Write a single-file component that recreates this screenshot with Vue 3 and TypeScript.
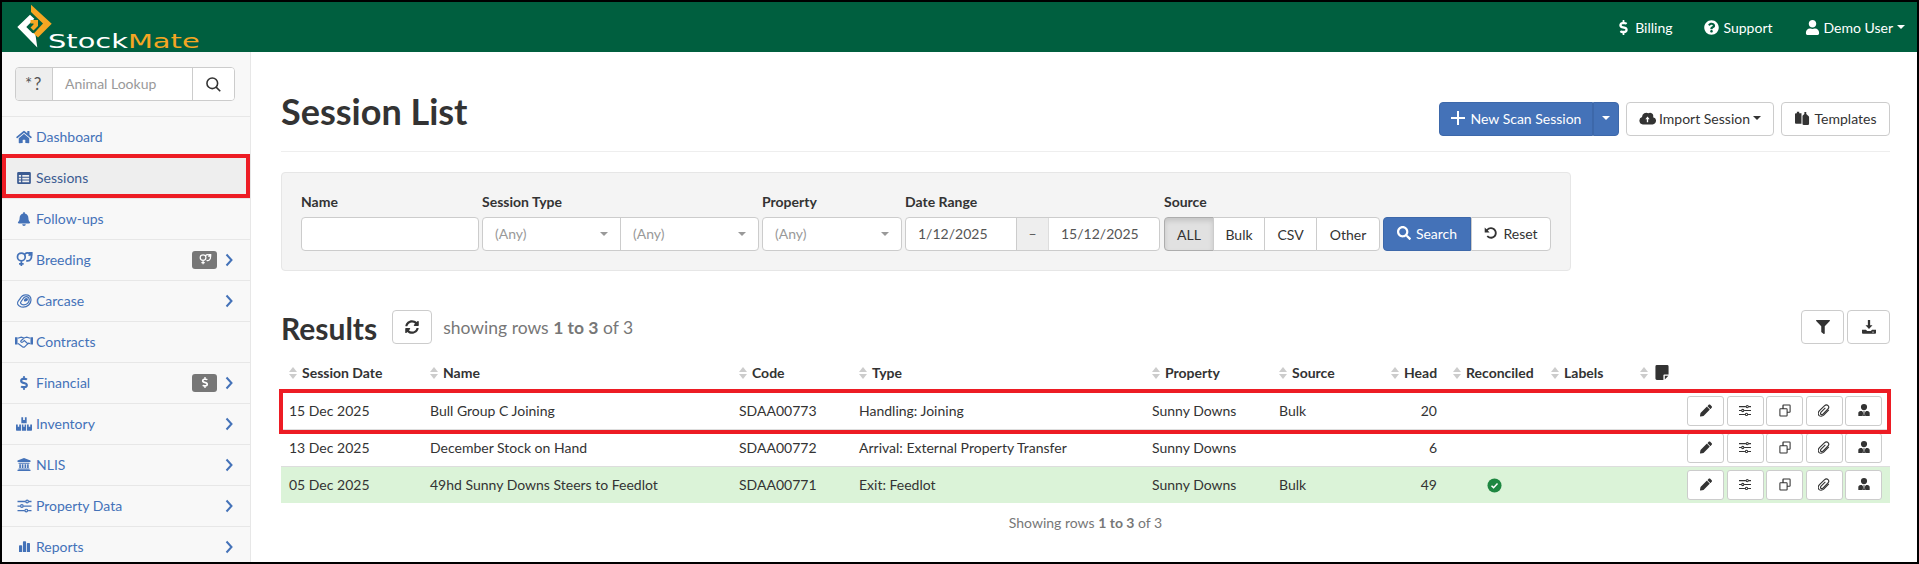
<template>
  <div class="frame">
    <header class="topbar">
      <a class="brand">
        <svg class="brand-mark" viewBox="0 0 36 46">
          <path d="M1.3 24 14 11.7l4.3 4.1-8 8.2 6 6 3 .4 2 14z" fill="#fff" />
          <path d="M15 1.7 35.7 20.7 22 34.5l-4.2-4L27 20.5 15 9z" fill="#f5a623" />
          <path d="M14.5 17h7.5v6l-4.5 4.5-3-3 3-3v-1h-3z" fill="#f5a623" />
        </svg>
        <span class="brand-name">Stock<em>Mate</em></span>
      </a>
      <nav class="topnav">
        <a><Icon name="dollar" class="top-ico" /> Billing</a>
        <a><Icon name="question" class="top-ico" /> Support</a>
        <a><Icon name="user" class="top-ico" /> Demo User <i class="caret"></i></a>
      </nav>
    </header>

    <div class="body">
      <aside class="sidebar">
        <div class="lookup">
          <div class="lookup-group">
            <span class="lookup-addon">*?</span>
            <span class="lookup-input">Animal Lookup</span>
            <button class="lookup-btn"><Icon name="searchThin" class="lookup-ico" /></button>
          </div>
        </div>
        <a
          v-for="item in navItems"
          :key="item.label"
          class="nav-item"
          :class="{ active: item.label === 'Sessions' }"
        >
          <span class="nav-ico-wrap"><Icon :name="item.icon" class="nav-ico" :class="'i-' + item.icon" /></span>
          <span class="nav-label">{{ item.label }}</span>
          <span v-if="item.badge" class="badge"><Icon :name="item.badge" class="badge-ico" /></span>
          <svg v-if="item.arrow" class="chev" viewBox="0 0 8 14">
            <path d="M1.5 1.5 6.5 7l-5 5.5" fill="none" stroke="currentColor" stroke-width="2" />
          </svg>
        </a>
      </aside>

      <main class="content">
        <div class="page-head">
          <h1>Session List</h1>
          <div class="page-actions">
            <div class="split">
              <button class="btn primary new-btn"><Icon name="plus" class="btn-ico" /> New Scan Session</button>
              <button class="btn primary split-caret"><i class="caret"></i></button>
            </div>
            <button class="btn import-btn"><Icon name="cloud" class="btn-ico" /> Import Session <i class="caret dark"></i></button>
            <button class="btn tmpl-btn"><Icon name="tags" class="btn-ico" /> Templates</button>
          </div>
        </div>

        <section class="filters">
          <div class="field f-name">
            <label>Name</label>
            <div class="control"></div>
          </div>
          <div class="field f-type">
            <label>Session Type</label>
            <div class="control joined">
              <span class="select first">(Any)<i class="caret grey"></i></span>
              <span class="select">(Any)<i class="caret grey"></i></span>
            </div>
          </div>
          <div class="field f-prop">
            <label>Property</label>
            <div class="control joined">
              <span class="select">(Any)<i class="caret grey"></i></span>
            </div>
          </div>
          <div class="field f-date">
            <label>Date Range</label>
            <div class="control joined">
              <span class="date">1/12/2025</span>
              <span class="dash">–</span>
              <span class="date">15/12/2025</span>
            </div>
          </div>
          <div class="field f-src">
            <label>Source</label>
            <div class="src-row">
              <div class="btn-group">
                <button
                  v-for="s in sources"
                  :key="s.label"
                  class="seg"
                  :class="{ on: s.label === 'ALL' }"
                  :style="{ width: s.width + 'px' }"
                >{{ s.label }}</button>
              </div>
              <button class="btn primary search-btn"><Icon name="search" class="btn-ico" /> Search</button>
              <button class="btn reset-btn"><Icon name="undo" class="btn-ico" /> Reset</button>
            </div>
          </div>
        </section>

        <div class="results-head">
          <h2>Results</h2>
          <button class="btn icon-btn refresh"><Icon name="sync" class="btn-ico" /></button>
          <span class="rows-info">showing rows <b>1 to 3</b> of 3</span>
          <div class="results-tools">
            <button class="btn icon-btn tool"><Icon name="filter" class="btn-ico" /></button>
            <button class="btn icon-btn tool"><Icon name="download" class="btn-ico" /></button>
          </div>
        </div>

        <table class="grid">
          <colgroup>
            <col v-for="(w, i) in colWidths" :key="i" :style="{ width: w + 'px' }" />
          </colgroup>
          <thead>
            <tr>
              <th v-for="h in headers" :key="h.label" :class="{ right: h.right }">
                <i class="sort"></i>{{ h.label }}<Icon v-if="h.note" name="note" class="note-ico" />
              </th>
              <th></th>
            </tr>
          </thead>
          <tbody>
            <tr v-for="row in rows" :key="row.code" :class="{ done: row.reconciled, marked: row.marked }">
              <td>{{ row.date }}</td>
              <td>{{ row.name }}</td>
              <td>{{ row.code }}</td>
              <td>{{ row.type }}</td>
              <td>{{ row.property }}</td>
              <td>{{ row.source }}</td>
              <td class="right">{{ row.head }}</td>
              <td class="center">
                <svg v-if="row.reconciled" class="check" viewBox="0 0 16 16">
                  <circle cx="8" cy="8" r="7.5" fill="#1e8741" />
                  <path d="M4.8 8.2 7 10.3l4.2-4.4" fill="none" stroke="#fff" stroke-width="1.6" />
                </svg>
              </td>
              <td></td>
              <td></td>
              <td class="actions">
                <button v-for="a in rowActions" :key="a" class="act"><Icon :name="a" class="act-ico" /></button>
              </td>
            </tr>
          </tbody>
        </table>
        <p class="grid-foot">Showing rows <b>1 to 3</b> of 3</p>
      </main>
    </div>
    <div class="mark-side"></div>
  </div>
</template>

<script setup lang="ts">
import { h } from "vue";

type Shape = { box: string; d?: string; stroke?: string; width?: number };

const icons: Record<string, Shape> = {
  home: { box: "0 0 576 512", d: "M280.37 148.26L96 300.11V464a16 16 0 0 0 16 16l112.06-.29a16 16 0 0 0 15.92-16V368a16 16 0 0 1 16-16h64a16 16 0 0 1 16 16v95.64a16 16 0 0 0 16 16.05L464 480a16 16 0 0 0 16-16V300L295.67 148.26a12.19 12.19 0 0 0-15.3 0zM571.6 251.47L488 182.56V44.05a12 12 0 0 0-12-12h-56a12 12 0 0 0-12 12v72.61L318.47 43a48 48 0 0 0-61 0L4.34 251.47a12 12 0 0 0-1.6 16.9l25.5 31A12 12 0 0 0 45.15 301l235.22-193.74a12.19 12.19 0 0 1 15.3 0L530.9 301a12 12 0 0 0 16.9-1.6l25.5-31a12 12 0 0 0-1.7-16.93z" },
  search: { box: "0 0 512 512", d: "M505 442.7L405.3 343c-4.5-4.5-10.6-7-17-7H372c27.6-35.3 44-79.7 44-128C416 93.1 322.9 0 208 0S0 93.1 0 208s93.1 208 208 208c48.3 0 92.7-16.4 128-44v16.3c0 6.4 2.5 12.5 7 17l99.7 99.7c9.4 9.4 24.6 9.4 33.9 0l28.3-28.3c9.4-9.4 9.4-24.6.1-34zM208 336c-70.7 0-128-57.2-128-128 0-70.7 57.2-128 128-128 70.7 0 128 57.2 128 128 0 70.7-57.2 128-128 128z" },
  searchThin: { box: "0 0 16 16", stroke: "M6.7 1a5.7 5.7 0 1 0 0 11.4A5.7 5.7 0 0 0 6.7 1zM10.8 10.8l4.4 4.4", width: 1.7 },
  bell: { box: "0 0 448 512", d: "M224 512c35.32 0 63.97-28.65 63.97-64H160.03c0 35.35 28.65 64 63.97 64zm215.39-149.71c-19.32-20.76-55.47-51.99-55.47-154.29 0-77.7-54.48-139.9-127.94-155.16V32c0-17.67-14.32-32-31.98-32s-31.98 14.33-31.98 32v20.84C118.56 68.1 64.08 130.3 64.08 208c0 102.3-36.15 133.53-55.47 154.29-6 6.45-8.66 14.16-8.61 21.71.11 16.4 12.98 32 32.1 32h383.8c19.12 0 32-15.6 32.1-32 .05-7.55-2.61-15.27-8.61-21.71z" },
  user: { box: "0 0 448 512", d: "M224 256c70.7 0 128-57.3 128-128S294.7 0 224 0 96 57.3 96 128s57.3 128 128 128zm89.6 32h-16.7c-22.2 10.2-46.9 16-72.9 16s-50.6-5.8-72.9-16h-16.7C60.2 288 0 348.2 0 422.4V464c0 26.5 21.5 48 48 48h352c26.5 0 48-21.5 48-48v-41.6c0-74.2-60.2-134.4-134.4-134.4z" },
  question: { box: "0 0 512 512", d: "M504 256c0 136.997-111.043 248-248 248S8 392.997 8 256C8 119.083 119.043 8 256 8s248 111.083 248 248zM262.655 90c-54.497 0-89.255 22.957-116.549 63.758-3.536 5.286-2.353 12.415 2.715 16.258l34.699 26.31c5.205 3.947 12.621 3.008 16.665-2.122 17.864-22.658 30.113-35.797 57.303-35.797 20.429 0 45.698 13.148 45.698 32.958 0 14.976-12.363 22.667-32.534 33.976C247.128 238.528 216 254.941 216 296v4c0 6.627 5.373 12 12 12h56c6.627 0 12-5.373 12-12v-1.333c0-28.462 83.186-29.647 83.186-106.667 0-58.002-60.165-102-116.531-102zM256 338c-25.365 0-46 20.635-46 46 0 25.364 20.635 46 46 46s46-20.636 46-46c0-25.365-20.635-46-46-46z" },
  table: { box: "0 0 16 14", d: "M1.5 0h13A1.5 1.5 0 0 1 16 1.5v11a1.5 1.5 0 0 1-1.5 1.5h-13A1.5 1.5 0 0 1 0 12.5v-11A1.5 1.5 0 0 1 1.5 0zM2 3.4v2.1h2.6V3.4zM6 3.4v2.1h8V3.4zM2 6.6v2.1h2.6V6.6zM6 6.6v2.1h8V6.6zM2 9.8v2.2h2.6V9.8zM6 9.8v2.2h8V9.8z" },
  dollar: { box: "0 0 288 512", d: "M209.2 233.4l-108-31.6C88.7 198.2 80 186.5 80 173.5c0-16.3 13.2-29.5 29.5-29.5h66.3c12.2 0 24.2 3.7 34.2 10.5 6.1 4.1 14.3 3.1 19.5-2l34.8-34c7.1-6.9 6.1-18.4-1.8-24.5C238 74.8 207.4 64.1 176 64V16c0-8.8-7.2-16-16-16h-32c-8.8 0-16 7.2-16 16v48h-2.5C45.8 64-5.4 118.7.5 183.6c4.2 46.1 39.4 83.6 83.8 96.6l102.5 30c12.5 3.7 21.2 15.3 21.2 28.3 0 16.3-13.2 29.5-29.5 29.5h-66.3C100 368 88 364.3 78 357.5c-6.1-4.1-14.3-3.1-19.5 2l-34.8 34c-7.1 6.9-6.1 18.4 1.8 24.5 24.5 19.2 55.1 29.9 86.5 30v48c0 8.8 7.2 16 16 16h32c8.8 0 16-7.2 16-16v-48.2c46.6-.9 90.3-28.6 105.7-72.7 21.5-61.6-14.6-124.8-72.5-141.7z" },
  pencil: { box: "0 0 512 512", d: "M497.9 142.1l-46.1 46.1c-4.7 4.7-12.3 4.7-17 0l-111-111c-4.7-4.7-4.7-12.3 0-17l46.1-46.1c18.7-18.7 49.1-18.7 67.9 0l60.1 60.1c18.8 18.7 18.8 49.1 0 67.9zM284.2 99.8L21.6 362.4.4 483.9c-2.9 16.4 11.4 30.6 27.8 27.8l121.5-21.3 262.6-262.6c4.7-4.7 4.7-12.3 0-17l-111-111c-4.8-4.7-12.4-4.7-17.1 0z" },
  filter: { box: "0 0 512 512", d: "M487.976 0H24.028C2.71 0-8.047 25.866 7.058 40.971L192 225.941V432c0 7.831 3.821 15.17 10.237 19.662l80 55.98C298.02 518.69 320 507.493 320 487.98V225.941l184.947-184.97C520.021 25.896 509.338 0 487.976 0z" },
  sync: { box: "0 0 512 512", d: "M370.72 133.28C339.458 104.008 298.888 87.962 255.848 88c-77.458.068-144.328 53.178-162.791 126.85-1.344 5.363-6.122 9.15-11.651 9.15H24.103c-7.498 0-13.194-6.807-11.807-14.176C33.933 94.924 134.813 8 256 8c66.448 0 126.791 26.136 171.315 68.685L463.03 40.97C478.149 25.851 504 36.559 504 57.941V192c0 13.255-10.745 24-24 24H345.941c-21.382 0-32.09-25.851-16.971-40.971l41.75-41.749zM32 296h134.059c21.382 0 32.09 25.851 16.971 40.971l-41.75 41.75c31.262 29.273 71.835 45.319 114.876 45.28 77.418-.07 144.315-53.144 162.787-126.849 1.344-5.363 6.122-9.15 11.651-9.15h57.304c7.498 0 13.194 6.807 11.807 14.176C478.067 417.076 377.187 504 256 504c-66.448 0-126.791-26.136-171.315-68.685L48.97 471.03C33.851 486.149 8 475.441 8 454.059V320c0-13.255 10.745-24 24-24z" },
  plus: { box: "0 0 14 14", d: "M6 0h2v6h6v2H8v6H6V8H0V6h6z" },
  undo: { box: "0 0 16 16", d: "M8 1.5a6.5 6.5 0 1 1-5 10.6l1.5-1.3A4.5 4.5 0 1 0 4.3 5.2L6.4 7.3H.8V1.7l2.1 2.1A6.5 6.5 0 0 1 8 1.5z" },
  cloud: { box: "0 0 20 16", d: "M16.6 7A3.9 3.9 0 0 0 11 2.4 5 5 0 0 0 3.6 6.6v.3A4.4 4.4 0 0 0 4.5 15.5H16a4.3 4.3 0 0 0 .6-8.5zM12.5 9.5h-1.7V13H9.2V9.5H7.5l2.5-3.2z" },
  tags: { box: "0 0 16 16", d: "M0 3.5A1 1 0 0 1 1 2.5h1V.8h2.5v1.7h2.4v11H1a1 1 0 0 1-1-1zM8 5l2-1.8V1h2v2.2L14 5a2 2 0 0 1 1 1.6v7a1.4 1.4 0 0 1-1.4 1.4H9.4A1.4 1.4 0 0 1 8 13.6z" },
  download: { box: "0 0 16 16", d: "M6.7 0h2.6v6H12L8 10.3 4 6h2.7zM0 11h4.4L6 12.7h4L11.6 11H16v3.6a1 1 0 0 1-1 1H1a1 1 0 0 1-1-1zM12.6 13a.8.8 0 1 0 0 1.6.8.8 0 0 0 0-1.6z" },
  note: { box: "0 0 14 16", d: "M1.5 0h11A1.5 1.5 0 0 1 14 1.5V10H9.5A1 1 0 0 0 8.5 11V16H1.5A1.5 1.5 0 0 1 0 14.5V1.5A1.5 1.5 0 0 1 1.5 0zM10 11.5h3.8L10 15.5z" },
  userTie: { box: "0 0 14 16", d: "M7 0a3.8 3.8 0 1 1 0 7.6A3.8 3.8 0 0 1 7 0zM2.8 8.6h1.8L6 10.8 5.4 14.8H.4a.4.4 0 0 1-.4-.4v-3C0 9.8 1.2 8.6 2.8 8.6zM9.4 8.6h1.8c1.6 0 2.8 1.2 2.8 2.8v3a.4.4 0 0 1-.4.4H8.6L8 10.8zM6.2 9h1.6L7.5 10.4 8.2 14.8H5.8L6.5 10.4z" },
  sliders: { box: "0 0 16 16", d: "M0 2.1h9v1.5H0zM13 2.1h3v1.5h-3zM11 .6a2.2 2.2 0 1 1 0 4.4 2.2 2.2 0 0 1 0-4.4zm0 1.4a.8.8 0 1 0 0 1.6.8.8 0 0 0 0-1.6zM0 7.3h3v1.5H0zM7 7.3h9v1.5H7zM5 5.8a2.2 2.2 0 1 1 0 4.4 2.2 2.2 0 0 1 0-4.4zm0 1.4a.8.8 0 1 0 0 1.6.8.8 0 0 0 0-1.6zM0 12.5h8v1.5H0zM12 12.5h4v1.5h-4zM10 11a2.2 2.2 0 1 1 0 4.4 2.2 2.2 0 0 1 0-4.4zm0 1.4a.8.8 0 1 0 0 1.6.8.8 0 0 0 0-1.6z" },
  copy: { box: "0 0 16 16", d: "M6 0h8a1.5 1.5 0 0 1 1.5 1.5v8A1.5 1.5 0 0 1 14 11h-2.5v3.5A1.5 1.5 0 0 1 10 16H2A1.5 1.5 0 0 1 .5 14.5v-8A1.5 1.5 0 0 1 2 5h2.5V1.5A1.5 1.5 0 0 1 6 0zm.2 1.4v3.6H10a1.5 1.5 0 0 1 1.5 1.5v3h2.6V1.4zM1.9 6.4v8.2h8.2V6.4z" },
  clip: { box: "0 0 16 16", stroke: "M14.4 7.2 7.6 14.2C5.6 16 2.7 15.8 1.3 14.4-.2 12.8.2 10.2 2 8.2L8.5 1.8C10 .4 12.2.3 13.4 1.5c1.3 1.3 1.1 3.3-.4 4.8L6.6 12.8c-.9.9-2.1.9-2.8.2s-.6-2 .3-2.9L9.8 4.5", width: 1.5 },
  venus: { box: "0 0 20 17", stroke: "M7 1.2a4.4 4.4 0 1 0 0 8.8 4.4 4.4 0 0 0 0-8.8zM7 10v6M4.4 13.4h5.2M11 2.4a4.4 4.4 0 1 1 1.5 7.4M15.2 4 18.6 1M15.4.9h3.4v3.4", width: 1.9 },
  steak: { box: "0 0 18 16", d: "M11.5 4.5c1.5 0 2.4 1 2 2.2-.4 1.4-2.2 2.3-3.6 1.9-1-.3-1.3-1.2-.8-2.1.5-1.1 1.4-2 2.4-2z", stroke: "M1.7 11.4C.8 8.8 3 7.8 4.3 5.6 5.6 3.2 7.4 1 11 1c3.8 0 6 2.6 6 5.8 0 4.4-4 8.2-9 8.2-3 0-5.2-1.4-6.3-3.6zM5.2 10.8c-1-1.4.8-2.4 1.9-4.2C8 5 9.2 3 11.3 3c2.2 0 3.7 1.6 3.7 3.7 0 3-3 5.8-6.3 5.8-1.5 0-2.8-.6-3.5-1.7z", width: 1.4 },
  shake: { box: "0 0 20 14", d: "M0 2.4h2.8v8H0zM17.2 2.4H20v8h-2.8z", stroke: "M3 3.4 7 2.2l3 .9 3-.9 4 1.2M3 9.4l.9.1 4.4 3.4c1 .7 2 .4 2.7-.3l3.9-3.8 2.1.5M10.2 3.1 6.6 6.2c-.9 1 .8 2.3 1.8 1.5l2-1.7 4.4 4", width: 1.3 },
  boxes: { box: "0 0 18 15", d: "M6 0h2v3h2V0h2v6.6H6zM0 8h2v2.6h1.6V8h2v7H.8a.8.8 0 0 1-.8-.8zM6.6 8h1.7v2.6H9.7V8h1.7v7H6.6zM12.4 8h1.9v2.6H16V8h2v6.2a.8.8 0 0 1-.8.8h-4.8z" },
  bank: { box: "0 0 16 16", d: "M8 0l8 3.2v1.6H0V3.2zM1.2 5.8h13.6V7H1.2zM2.2 7.6h2v4.8h-2zM5.3 7.6h2v4.8h-2zM8.7 7.6h2v4.8h-2zM11.8 7.6h2v4.8h-2zM1.2 13h13.6v1.2H1.2zM0 14.6h16V16H0z" },
  bars: { box: "0 0 14 14", d: "M0 6.5a1 1 0 0 1 1-1h2a1 1 0 0 1 1 1V14H0zM5 1.2a1 1 0 0 1 1-1h2a1 1 0 0 1 1 1V14H5zM10 3.5a1 1 0 0 1 1-1h2a1 1 0 0 1 1 1V14h-4z" },
};

// 小图标统一走这里，fill 跟随文字颜色
const Icon = (props: { name: string }) => {
  const s = icons[props.name];
  const parts = [];
  if (s.d) parts.push(h("path", { d: s.d, fill: "currentColor", "fill-rule": "evenodd" }));
  if (s.stroke) parts.push(h("path", { d: s.stroke, fill: "none", stroke: "currentColor", "stroke-width": s.width }));
  return h("svg", { viewBox: s.box, "aria-hidden": "true" }, parts);
};
Icon.props = ["name"];

const navItems = [
  { label: "Dashboard", icon: "home" },
  { label: "Sessions", icon: "table" },
  { label: "Follow-ups", icon: "bell" },
  { label: "Breeding", icon: "venus", badge: "venus", arrow: true },
  { label: "Carcase", icon: "steak", arrow: true },
  { label: "Contracts", icon: "shake" },
  { label: "Financial", icon: "dollar", badge: "dollar", arrow: true },
  { label: "Inventory", icon: "boxes", arrow: true },
  { label: "NLIS", icon: "bank", arrow: true },
  { label: "Property Data", icon: "sliders", arrow: true },
  { label: "Reports", icon: "bars", arrow: true },
];

const sources = [
  { label: "ALL", width: 50 },
  { label: "Bulk", width: 52 },
  { label: "CSV", width: 53 },
  { label: "Other", width: 64 },
];

const colWidths = [141, 309, 120, 293, 127, 112, 62, 98, 89, 40, 218];

const headers = [
  { label: "Session Date" },
  { label: "Name" },
  { label: "Code" },
  { label: "Type" },
  { label: "Property" },
  { label: "Source" },
  { label: "Head", right: true },
  { label: "Reconciled" },
  { label: "Labels" },
  { label: "", note: true },
];

const rows = [
  { date: "15 Dec 2025", name: "Bull Group C Joining", code: "SDAA00773", type: "Handling: Joining", property: "Sunny Downs", source: "Bulk", head: 20, reconciled: false, marked: true },
  { date: "13 Dec 2025", name: "December Stock on Hand", code: "SDAA00772", type: "Arrival: External Property Transfer", property: "Sunny Downs", source: "", head: 6, reconciled: false, marked: false },
  { date: "05 Dec 2025", name: "49hd Sunny Downs Steers to Feedlot", code: "SDAA00771", type: "Exit: Feedlot", property: "Sunny Downs", source: "Bulk", head: 49, reconciled: true, marked: false },
];

const rowActions = ["pencil", "sliders", "copy", "clip", "userTie"];
</script>

<style>
html,
body {
  margin: 0;
  background: #000;
}
</style>

<style scoped>
.frame {
  position: relative;
  box-sizing: border-box;
  width: 1919px;
  height: 564px;
  border: 2px solid #000;
  overflow: hidden;
  background: #fff;
  font-family: Lato, "Liberation Sans", sans-serif;
  font-size: 14px;
  color: #333;
  display: flex;
  flex-direction: column;
}

button {
  font-family: inherit;
  cursor: pointer;
}

.caret {
  display: inline-block;
  width: 0;
  height: 0;
  border-left: 4px solid transparent;
  border-right: 4px solid transparent;
  border-top: 4px solid currentColor;
  vertical-align: middle;
}

.caret.dark {
  color: #333;
}

.topbar {
  flex: none;
  height: 50px;
  background: #005f3f;
  color: #fff;
  display: flex;
  align-items: center;
  justify-content: space-between;
}

.brand {
  display: flex;
  align-items: flex-end;
  height: 50px;
  padding-left: 14px;
}

.brand-mark {
  width: 36px;
  height: 46px;
  margin-bottom: 3px;
}

.brand-name {
  font-family: "DejaVu Sans", sans-serif;
  font-size: 19px;
  line-height: 24px;
  margin-left: -4px;
  margin-bottom: -1px;
  color: #fff;
  transform: scaleX(1.52);
  transform-origin: left;
}

.brand-name em {
  font-style: normal;
  color: #f5a623;
}

.topnav {
  display: flex;
  gap: 32px;
  padding-right: 12px;
  font-size: 14px;
}

.topnav a {
  display: flex;
  align-items: center;
  gap: 4px;
}

.top-ico {
  height: 15px;
  width: 15px;
}

.body {
  flex: 1;
  display: flex;
  min-height: 0;
}

.sidebar {
  flex: none;
  box-sizing: content-box;
  width: 248px;
  background: #f8f8f8;
  border-right: 1px solid #e7e7e7;
}

.lookup {
  box-sizing: border-box;
  height: 65px;
  padding: 15px 13px 0;
  border-bottom: 1px solid #e7e7e7;
}

.lookup-group {
  display: flex;
  height: 34px;
  box-sizing: border-box;
  border: 1px solid #ccc;
  border-radius: 4px;
  background: #fff;
  overflow: hidden;
  width: 220px;
}

.lookup-addon {
  width: 36px;
  background: #eee;
  border-right: 1px solid #ccc;
  text-align: center;
  line-height: 32px;
  color: #555;
  font-size: 17px;
  letter-spacing: 1.5px;
}

.lookup-input {
  flex: 1;
  padding-left: 12px;
  line-height: 32px;
  color: #999;
}

.lookup-btn {
  width: 42px;
  border: 0;
  border-left: 1px solid #ccc;
  background: #fff;
  color: #333;
  padding: 0;
}

.lookup-ico {
  width: 15px;
  height: 15px;
  display: block;
  margin: auto;
}

.nav-item {
  box-sizing: border-box;
  height: 41px;
  display: flex;
  align-items: center;
  padding: 0 14px 1px 11px;
  color: #4472b8;
  border-bottom: 1px solid #e7e7e7;
}

.nav-item.active {
  background: #eee;
  color: #3b5b92;
}

.nav-ico-wrap {
  width: 22px;
  display: flex;
  justify-content: center;
  flex: none;
  margin-right: 1px;
}

.nav-ico {
  width: 16px;
  height: 14px;
}

.i-venus {
  width: 18px;
  height: 15px;
}

.i-shake {
  width: 18px;
  height: 13px;
}

.i-table {
  width: 14px;
  height: 12px;
}

.i-sliders {
  width: 15px;
  height: 14px;
}

.i-bars {
  width: 13px;
  height: 11px;
}

.i-bank {
  width: 14px;
  height: 13px;
}

.nav-label {
  flex: 1;
}

.badge {
  box-sizing: border-box;
  width: 25px;
  height: 18px;
  background: #777;
  color: #fff;
  border-radius: 3px;
  display: flex;
  align-items: center;
  justify-content: center;
  margin-right: 8px;
}

.badge-ico {
  width: 14px;
  height: 11px;
}

.chev {
  width: 8px;
  height: 14px;
  margin-right: 3px;
}

.content {
  flex: 1;
  min-width: 0;
  padding: 0 27px 0 30px;
}

.page-head {
  height: 100px;
  box-sizing: border-box;
  border-bottom: 1px solid #eee;
  display: flex;
  justify-content: space-between;
  padding-top: 50px;
}

h1 {
  margin: -11px 0 0;
  font-size: 36px;
  line-height: 40px;
  font-weight: 700;
  color: #333;
}

.page-actions {
  display: flex;
  gap: 7px;
  height: 34px;
}

.btn {
  box-sizing: border-box;
  height: 34px;
  border: 1px solid #ccc;
  border-radius: 4px;
  background: #fff;
  color: #333;
  font-size: 14px;
  display: inline-flex;
  align-items: center;
  justify-content: center;
  gap: 5px;
  padding: 0 0 2px;
}

.btn.primary {
  background: #4472b8;
  border-color: #3d68aa;
  color: #fff;
}

.btn-ico {
  width: 14px;
  height: 14px;
}

.split {
  display: flex;
}

.new-btn {
  width: 154px;
  border-radius: 4px 0 0 4px;
  gap: 6px;
}

.split-caret {
  width: 26px;
  border-radius: 0 4px 4px 0;
  border-left-color: #3d68aa;
}

.import-btn {
  width: 148px;
  gap: 3px;
}

.import-btn .btn-ico {
  width: 17px;
}

.tmpl-btn {
  width: 109px;
}

.tmpl-btn .btn-ico {
  width: 15px;
  height: 15px;
}

.filters {
  box-sizing: border-box;
  margin-top: 20px;
  width: 1290px;
  height: 99px;
  background: #f4f4f4;
  border: 1px solid #e6e6e6;
  border-radius: 4px;
  padding: 19px 0 0 19px;
  display: flex;
  gap: 3px;
}

.field label {
  display: block;
  font-weight: 700;
  font-size: 14px;
  line-height: 20px;
  margin-bottom: 5px;
  color: #333;
}

.control {
  box-sizing: border-box;
  height: 34px;
  border: 1px solid #ccc;
  border-radius: 4px;
  background: #fff;
  display: flex;
  overflow: hidden;
}

.f-name {
  width: 178px;
}

.f-type {
  width: 277px;
}

.f-prop {
  width: 140px;
}

.f-date {
  width: 255px;
}

.f-src {
  margin-left: 1px;
}

.select {
  flex: 1;
  position: relative;
  padding-left: 12px;
  line-height: 32px;
  color: #999;
}

.select.first {
  border-right: 1px solid #ccc;
}

.caret.grey {
  position: absolute;
  right: 12px;
  top: 14px;
  color: #999;
}

.date {
  flex: 1;
  padding-left: 12px;
  line-height: 32px;
  color: #555;
}

.dash {
  width: 33px;
  flex: none;
  text-align: center;
  background: #eee;
  line-height: 32px;
  color: #555;
  border-left: 1px solid #ccc;
  border-right: 1px solid #ddd;
  box-sizing: border-box;
}

.src-row {
  display: flex;
}

.btn-group {
  display: flex;
  margin-right: 3px;
}

.seg {
  box-sizing: border-box;
  height: 34px;
  border: 1px solid #ccc;
  margin-left: -1px;
  background: #fff;
  color: #333;
  font-size: 14px;
  padding: 0;
}

.seg:first-child {
  margin-left: 0;
  border-radius: 4px 0 0 4px;
}

.seg:last-child {
  border-radius: 0 4px 4px 0;
}

.seg.on {
  background: #e1e1e1;
  border-color: #adadad;
  box-shadow: inset 0 3px 5px rgba(0, 0, 0, 0.125);
}

.search-btn {
  width: 88px;
  border-radius: 4px 0 0 4px;
}

.reset-btn {
  width: 80px;
  border-radius: 0 4px 4px 0;
}

.results-head {
  margin-top: 39px;
  height: 34px;
  display: flex;
  align-items: center;
}

h2 {
  margin: 1px 0 0;
  font-size: 30px;
  line-height: 34px;
  font-weight: 700;
  color: #333;
}

.icon-btn {
  width: 40px;
  padding: 0;
}

.refresh {
  margin-left: 15px;
}

.rows-info {
  margin-left: 11px;
  font-size: 17.5px;
  color: #777;
}

.results-tools {
  margin-left: auto;
  display: flex;
  gap: 3px;
}

.tool {
  width: 43px;
}

.grid {
  margin-top: 9px;
  width: 1609px;
  table-layout: fixed;
  border-collapse: separate;
  border-spacing: 0;
}

.grid th {
  height: 39px;
  padding: 0 8px;
  text-align: left;
  font-weight: 700;
  font-size: 14px;
  white-space: nowrap;
  vertical-align: middle;
}

.grid td {
  height: 37px;
  box-sizing: border-box;
  padding: 0 8px 1px;
  border-top: 1px solid #ddd;
  white-space: nowrap;
  vertical-align: middle;
}

.grid .right {
  text-align: right;
}

.grid .center {
  text-align: center;
}

.sort {
  display: inline-block;
  position: relative;
  width: 9px;
  height: 12px;
  margin-right: 4px;
  vertical-align: -1px;
}

.sort::before,
.sort::after {
  content: "";
  position: absolute;
  left: 0;
  border-left: 4.5px solid transparent;
  border-right: 4.5px solid transparent;
}

.sort::before {
  top: 0;
  border-bottom: 5px solid #ccc;
}

.sort::after {
  bottom: 0;
  border-top: 5px solid #ccc;
}

.note-ico {
  width: 14px;
  height: 15px;
  margin-left: 2px;
  vertical-align: -2px;
}

.marked td {
  position: relative;
}

.marked td:first-child::after {
  content: "";
  position: absolute;
  z-index: 2;
  left: -2px;
  top: -4px;
  width: 1612px;
  height: 45px;
  box-sizing: border-box;
  border: 4px solid #ed1c24;
  pointer-events: none;
}

.done td {
  background: #dbf3d8;
}

.check {
  width: 15px;
  height: 15px;
  display: inline-block;
  vertical-align: middle;
}

.actions {
  text-align: right;
  font-size: 0;
}

.act {
  box-sizing: border-box;
  width: 37px;
  height: 30px;
  margin-left: 2.5px;
  padding: 0;
  background: #fff;
  border: 1px solid #ccc;
  border-radius: 3px;
  color: #333;
  vertical-align: middle;
}

.act-ico {
  width: 12px;
  height: 13px;
  display: block;
  margin: auto;
}

.grid-foot {
  margin: 10px 0 0;
  text-align: center;
  color: #777;
  font-size: 14px;
  line-height: 20px;
  width: 1609px;
}

.mark-side {
  position: absolute;
  left: 0;
  top: 152px;
  width: 248px;
  height: 44px;
  box-sizing: border-box;
  border: 4px solid #ed1c24;
  pointer-events: none;
}
</style>
